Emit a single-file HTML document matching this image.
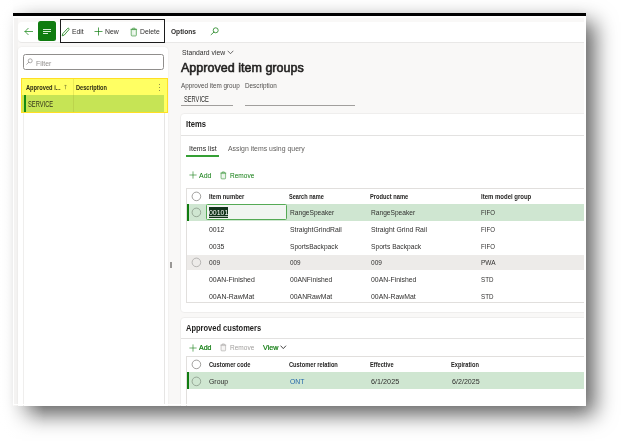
<!DOCTYPE html>
<html lang="en"><head><meta charset="utf-8"><title>Approved item groups</title>
<style>
html,body{margin:0;padding:0;background:#fff;}
body{width:621px;height:441px;overflow:hidden;position:relative;font-family:"Liberation Sans",sans-serif;}
#shot{position:absolute;left:0;top:0;width:621px;height:441px;overflow:hidden;}
#shot div, #shot svg{position:absolute;box-sizing:border-box;}
.t{white-space:pre;transform-origin:0 50%;}
#frame{left:13px;top:13px;width:573px;height:392.5px;background:#f9f8f7;box-shadow:9px 9px 20px rgba(0,0,0,.6), -3px 3px 14px rgba(0,0,0,.06);}
#clip{will-change:transform;filter:blur(0.35px);left:0;top:0;width:586px;height:405.5px;overflow:hidden;}
#lmask{left:0;top:0;width:13px;height:405.5px;background:linear-gradient(to right,rgba(255,255,255,1) 0,rgba(255,255,255,.55) 100%);}
#lmask2{left:0;top:405.5px;width:44px;height:35.5px;background:linear-gradient(to right,rgba(255,255,255,1) 0,rgba(255,255,255,.55) 13px,rgba(255,255,255,0) 44px);}

</style></head>
<body>
<div id="shot">
<div id="frame"></div>
<div id="lmask"></div><div id="lmask2"></div>
<div id="clip">
<!-- top black bar -->
<div style="left:13px;top:13px;width:573px;height:3.3px;background:#000"></div>
<div style="left:13px;top:16.3px;width:573px;height:1.5px;background:#fff"></div>
<div style="left:13px;top:16px;width:1.2px;height:389px;background:#fff"></div>
<div style="left:14.2px;top:18px;width:3.6px;height:388px;background:#f4f3f2"></div>
<!-- toolbar -->
<div style="left:18px;top:21.6px;width:569px;height:21px;background:#fff;border-radius:4px 0 0 4px;border-bottom:1px solid #e9e8e7"></div>
<svg style="left:24px;top:26px" width="11" height="11" viewBox="0 0 11 11"><path d="M8.6 5.5H1M4.2 2.3L1 5.5L4.2 8.7" fill="none" stroke="#1c8a1c" stroke-width="0.75" stroke-linecap="round" stroke-linejoin="round"/></svg>
<div style="left:38.1px;top:21.4px;width:18.4px;height:19.9px;background:#107c10;border-radius:2.5px"></div>
<div style="left:43.2px;top:28.65px;width:8.3px;height:0.65px;background:#d9eed9"></div>
<div style="left:43.2px;top:30.8px;width:8.3px;height:0.65px;background:#d9eed9"></div>
<div style="left:43.2px;top:32.95px;width:5.3px;height:0.65px;background:#d9eed9"></div>
<div style="left:60px;top:19.4px;width:105.2px;height:23.6px;border:1.5px solid #1b1b1b"></div>
<!-- edit pencil -->
<svg style="left:61px;top:26.6px" width="9" height="10" viewBox="0 0 9 10"><path d="M1.2 8.8L1.8 6.6L6.6 1.4Q7.3 0.8 7.9 1.5Q8.4 2.1 7.8 2.8L3.2 8.1Z" fill="none" stroke="#107c10" stroke-width="0.8" stroke-linejoin="round"/></svg>
<!-- plus -->
<svg style="left:94.1px;top:27px" width="9" height="9" viewBox="0 0 9 9"><path d="M4.5 0.5V8.5M0.5 4.5H8.5" stroke="#107c10" stroke-width="0.7" fill="none"/></svg>
<!-- trash -->
<svg style="left:129.8px;top:26.6px" width="8" height="10" viewBox="0 0 8 10"><path d="M1.2 2.3H6.4V8Q6.4 9 5.4 9H2.2Q1.2 9 1.2 8Z" fill="#dff0df" stroke="#2f8f2f" stroke-width="0.6" stroke-linejoin="round"/><path d="M0.5 2.3H7.1M2.7 2.2V1.1H4.9V2.2" fill="none" stroke="#2f8f2f" stroke-width="0.6"/><path d="M3 3.9V7.4M4.6 3.9V7.4" fill="none" stroke="#fff" stroke-width="0.7"/></svg>
<!-- search icon toolbar -->
<svg style="left:210px;top:26px" width="10" height="10" viewBox="0 0 10 10"><circle cx="5.7" cy="4.3" r="2.5" fill="none" stroke="#107c10" stroke-width="0.75"/><path d="M3.9 6.1L1.1 8.7" stroke="#107c10" stroke-width="0.75" stroke-linecap="round"/></svg>

<!-- left panel -->
<div style="left:18px;top:46.9px;width:150.4px;height:360px;background:#fff;border-radius:4px 4px 0 0;box-shadow:0 0 2px rgba(0,0,0,.09)"></div>
<div style="left:22.8px;top:113px;width:1px;height:293px;background:#efeeed"></div>
<div style="left:164px;top:113px;width:1px;height:292px;background:#e6e5e4"></div>
<div style="left:23.3px;top:54.2px;width:140.5px;height:15.4px;border:1px solid #908e8c;border-radius:2.5px;background:#fff"></div>
<svg style="left:25.9px;top:58.3px" width="7" height="7" viewBox="0 0 7 7"><circle cx="4.2" cy="2.8" r="2" fill="none" stroke="#8a8886" stroke-width="0.7"/><path d="M2.8 4.2L0.7 6.3" stroke="#8a8886" stroke-width="0.7" stroke-linecap="round"/></svg>
<!-- yellow highlight -->
<div style="left:21.2px;top:77.6px;width:147px;height:35.4px;background:#ffff63;border:1.2px solid #ffdf24"></div>
<div style="left:22.2px;top:95px;width:141.6px;height:17.1px;background:#c6e455"></div>
<div style="left:23.7px;top:95px;width:2px;height:17.1px;background:#168a0e"></div>
<div style="left:73.1px;top:79px;width:0.7px;height:33px;background:rgba(150,150,40,.2)"></div>
<!-- sort arrow -->
<svg style="left:63.3px;top:84px" width="5" height="6" viewBox="0 0 5 6"><path d="M2.5 5.3V1M1.3 2.1L2.5 0.9L3.7 2.1" fill="none" stroke="#6a6a30" stroke-width="0.5"/></svg>
<!-- dots -->
<div style="left:159.2px;top:84.4px;width:0.9px;height:0.9px;background:#94944a"></div>
<div style="left:159.2px;top:87.1px;width:0.9px;height:0.9px;background:#94944a"></div>
<div style="left:159.2px;top:89.8px;width:0.9px;height:0.9px;background:#94944a"></div>

<!-- splitter handle -->
<div style="left:169.8px;top:261.7px;width:2px;height:6.3px;background:#9a9896"></div>

<!-- header chevron -->
<svg style="left:227px;top:50px" width="7" height="5" viewBox="0 0 7 5"><path d="M0.7 0.8L3.5 3.7L6.3 0.8" fill="none" stroke="#323130" stroke-width="0.7"/></svg>
<div style="left:181.3px;top:104.8px;width:52px;height:0.9px;background:#a19f9d"></div>
<div style="left:245.4px;top:104.8px;width:109.8px;height:0.9px;background:#a19f9d"></div>

<!-- Items card -->
<div style="left:180.2px;top:113px;width:420px;height:199.8px;background:#fff;border:1px solid #efeeed;border-radius:4px"></div>
<div style="left:181px;top:135px;width:405px;height:0.9px;background:#e3e2e1"></div>
<div style="left:186.3px;top:155.4px;width:33px;height:1.6px;background:#35a035"></div>
<svg style="left:189px;top:171.3px" width="8" height="8" viewBox="0 0 8 8"><path d="M4 0.4V7.6M0.4 4H7.6" stroke="#107c10" stroke-width="0.6" fill="none"/></svg>
<svg style="left:219.9px;top:170.6px" width="7" height="9" viewBox="0 0 7 9"><path d="M1 2H5.6V7Q5.6 7.9 4.7 7.9H1.9Q1 7.9 1 7Z" fill="#e3f2e3" stroke="#2f8f2f" stroke-width="0.55" stroke-linejoin="round"/><path d="M0.4 2H6.2M2.3 1.9V0.9H4.3V1.9" fill="none" stroke="#2f8f2f" stroke-width="0.55"/><path d="M2.6 3.4V6.5M4 3.4V6.5" fill="none" stroke="#fff" stroke-width="0.55"/></svg>
<!-- grid 1 -->
<div style="left:186.3px;top:187.7px;width:400px;height:115.6px;border:1px solid #e1dfdd;border-right:0;background:#fff"></div>
<div style="left:187px;top:204.1px;width:399px;height:16.7px;background:#cfe6d1"></div>
<div style="left:186.5px;top:204.1px;width:2.1px;height:16.7px;background:#107c10"></div>
<div style="left:206px;top:204.1px;width:80.8px;height:16.4px;background:#f1f5f1;border:1px solid #55aa55;border-radius:1.5px"></div>
<div style="left:208.7px;top:207.1px;width:19.8px;height:11px;background:#11331a"></div>
<div style="left:187px;top:254.6px;width:399px;height:15.7px;background:#edebe9"></div>
<svg style="left:191px;top:191px" width="11" height="11" viewBox="0 0 11 11"><circle cx="5.4" cy="5.4" r="4.3" fill="#fff" stroke="#7a7876" stroke-width="0.7"/></svg>
<svg style="left:191px;top:207.4px" width="11" height="11" viewBox="0 0 11 11"><circle cx="5.4" cy="5.4" r="4.3" fill="none" stroke="#7f8f80" stroke-width="0.7"/></svg>
<svg style="left:191px;top:257.2px" width="11" height="11" viewBox="0 0 11 11"><circle cx="5.4" cy="5.4" r="4.3" fill="none" stroke="#a19f9d" stroke-width="0.7"/></svg>

<!-- Approved customers card -->
<div style="left:180.2px;top:316.6px;width:420px;height:100px;background:#fff;border:1px solid #efeeed;border-radius:4px"></div>
<div style="left:181px;top:338.4px;width:405px;height:0.9px;background:#e3e2e1"></div>
<svg style="left:189px;top:343.6px" width="8" height="8" viewBox="0 0 8 8"><path d="M4 0.4V7.6M0.4 4H7.6" stroke="#107c10" stroke-width="0.6" fill="none"/></svg>
<svg style="left:219.9px;top:343.0px" width="7" height="9" viewBox="0 0 7 9"><path d="M1 2H5.6V7Q5.6 7.9 4.7 7.9H1.9Q1 7.9 1 7Z" fill="#f1f0ef" stroke="#a5a3a1" stroke-width="0.55" stroke-linejoin="round"/><path d="M0.4 2H6.2M2.3 1.9V0.9H4.3V1.9" fill="none" stroke="#a5a3a1" stroke-width="0.55"/><path d="M2.6 3.4V6.5M4 3.4V6.5" fill="none" stroke="#fff" stroke-width="0.55"/></svg>
<svg style="left:280.3px;top:345.2px" width="7" height="5" viewBox="0 0 7 5"><path d="M0.6 0.7L3.3 3.6L6 0.7" fill="none" stroke="#323130" stroke-width="0.9"/></svg>
<!-- grid 2 -->
<div style="left:186.3px;top:355.5px;width:400px;height:60px;border:1px solid #e1dfdd;border-right:0;background:#fff"></div>
<div style="left:187px;top:372.2px;width:399px;height:16.6px;background:#cfe6d1"></div>
<div style="left:186.6px;top:372.2px;width:2.1px;height:16.6px;background:#107c10"></div>
<svg style="left:191px;top:359.3px" width="11" height="11" viewBox="0 0 11 11"><circle cx="5.4" cy="5.4" r="4.3" fill="#fff" stroke="#7a7876" stroke-width="0.7"/></svg>
<svg style="left:191px;top:376px" width="11" height="11" viewBox="0 0 11 11"><circle cx="5.4" cy="5.4" r="4.3" fill="none" stroke="#7f8f80" stroke-width="0.7"/></svg>

<div style="left:584.4px;top:16px;width:1.6px;height:390px;background:#fff"></div>
<div style="left:13px;top:404.3px;width:573px;height:1.2px;background:#fff"></div>

<div class="t" style="left:72.0px;top:26.94px;font-size:8.03px;line-height:9.64px;font-weight:400;color:#302f2e;transform:scaleX(0.8452);">Edit</div>
<div class="t" style="left:105.2px;top:26.94px;font-size:8.03px;line-height:9.64px;font-weight:400;color:#302f2e;transform:scaleX(0.8589);">New</div>
<div class="t" style="left:140.3px;top:26.94px;font-size:8.03px;line-height:9.64px;font-weight:400;color:#302f2e;transform:scaleX(0.8489);">Delete</div>
<div class="t" style="left:171.2px;top:27.03px;font-size:7.7px;line-height:9.24px;font-weight:700;color:#302f2e;transform:scaleX(0.8569);">Options</div>
<div class="t" style="left:36.0px;top:58.65px;font-size:7.49px;line-height:8.99px;font-weight:400;color:#918f8d;transform:scaleX(0.9188);">Filter</div>
<div class="t" style="left:25.8px;top:83.81px;font-size:6.53px;line-height:7.84px;font-weight:700;color:#2b2a14;transform:scaleX(0.8736);">Approved i...</div>
<div class="t" style="left:76.2px;top:83.81px;font-size:6.53px;line-height:7.84px;font-weight:700;color:#2b2a14;transform:scaleX(0.8640);">Description</div>
<div class="t" style="left:27.9px;top:99.06px;font-size:8.35px;line-height:10.02px;font-weight:400;color:#33321a;transform:scaleX(0.6908);">SERVICE</div>
<div class="t" style="left:181.6px;top:49.38px;font-size:7.28px;line-height:8.74px;font-weight:400;color:#302f2e;transform:scaleX(0.9372);">Standard view</div>
<div class="t" style="left:181.3px;top:59.63px;font-size:13.05px;line-height:15.66px;font-weight:400;color:#201f1e;transform:scaleX(0.9617);-webkit-text-stroke:0.59px currentColor;">Approved item groups</div>
<div class="t" style="left:181.3px;top:82.11px;font-size:6.53px;line-height:7.84px;font-weight:400;color:#504e4c;transform:scaleX(0.9696);">Approved item group</div>
<div class="t" style="left:245.2px;top:82.11px;font-size:6.53px;line-height:7.84px;font-weight:400;color:#504e4c;transform:scaleX(0.9749);">Description</div>
<div class="t" style="left:184.2px;top:93.86px;font-size:8.35px;line-height:10.02px;font-weight:400;color:#302f2e;transform:scaleX(0.6826);">SERVICE</div>
<div class="t" style="left:186.0px;top:119.08px;font-size:8.99px;line-height:10.79px;font-weight:700;color:#201f1e;transform:scaleX(0.8539);">Items</div>
<div class="t" style="left:188.8px;top:144.15px;font-size:7.49px;line-height:8.99px;font-weight:400;color:#201f1e;transform:scaleX(0.9371);">Items list</div>
<div class="t" style="left:227.8px;top:144.15px;font-size:7.49px;line-height:8.99px;font-weight:400;color:#605e5c;transform:scaleX(0.9222);">Assign items using query</div>
<div class="t" style="left:199.2px;top:170.95px;font-size:7.49px;line-height:8.99px;font-weight:400;color:#107c10;transform:scaleX(0.9369);">Add</div>
<div class="t" style="left:229.8px;top:170.95px;font-size:7.49px;line-height:8.99px;font-weight:400;color:#107c10;transform:scaleX(0.8744);">Remove</div>
<div class="t" style="left:208.5px;top:193.01px;font-size:6.53px;line-height:7.84px;font-weight:700;color:#252423;transform:scaleX(0.9045);">Item number</div>
<div class="t" style="left:289.4px;top:193.01px;font-size:6.53px;line-height:7.84px;font-weight:700;color:#252423;transform:scaleX(0.8573);">Search name</div>
<div class="t" style="left:369.9px;top:193.01px;font-size:6.53px;line-height:7.84px;font-weight:700;color:#252423;transform:scaleX(0.8808);">Product name</div>
<div class="t" style="left:480.6px;top:193.01px;font-size:6.53px;line-height:7.84px;font-weight:700;color:#252423;transform:scaleX(0.9195);">Item model group</div>
<div class="t" style="left:208.9px;top:208.45px;font-size:7.49px;line-height:8.99px;font-weight:400;color:#ffffff;transform:scaleX(0.9265);text-decoration:underline;text-decoration-thickness:0.5px;text-decoration-color:rgba(255,255,255,.65);">00101</div>
<div class="t" style="left:290.0px;top:208.45px;font-size:7.49px;line-height:8.99px;font-weight:400;color:#302f2e;transform:scaleX(0.8845);">RangeSpeaker</div>
<div class="t" style="left:370.7px;top:208.45px;font-size:7.49px;line-height:8.99px;font-weight:400;color:#302f2e;transform:scaleX(0.8845);">RangeSpeaker</div>
<div class="t" style="left:481.4px;top:208.45px;font-size:7.49px;line-height:8.99px;font-weight:400;color:#302f2e;transform:scaleX(0.8143);">FIFO</div>
<div class="t" style="left:208.9px;top:225.35px;font-size:7.49px;line-height:8.99px;font-weight:400;color:#302f2e;transform:scaleX(0.9239);">0012</div>
<div class="t" style="left:290.0px;top:225.35px;font-size:7.49px;line-height:8.99px;font-weight:400;color:#302f2e;transform:scaleX(0.9098);">StraightGrindRail</div>
<div class="t" style="left:370.7px;top:225.35px;font-size:7.49px;line-height:8.99px;font-weight:400;color:#302f2e;transform:scaleX(0.9149);">Straight Grind Rail</div>
<div class="t" style="left:481.4px;top:225.35px;font-size:7.49px;line-height:8.99px;font-weight:400;color:#302f2e;transform:scaleX(0.8143);">FIFO</div>
<div class="t" style="left:208.9px;top:242.05px;font-size:7.49px;line-height:8.99px;font-weight:400;color:#302f2e;transform:scaleX(0.9239);">0035</div>
<div class="t" style="left:290.0px;top:242.05px;font-size:7.49px;line-height:8.99px;font-weight:400;color:#302f2e;transform:scaleX(0.8867);">SportsBackpack</div>
<div class="t" style="left:370.7px;top:242.05px;font-size:7.49px;line-height:8.99px;font-weight:400;color:#302f2e;transform:scaleX(0.8913);">Sports Backpack</div>
<div class="t" style="left:481.4px;top:242.05px;font-size:7.49px;line-height:8.99px;font-weight:400;color:#302f2e;transform:scaleX(0.8143);">FIFO</div>
<div class="t" style="left:208.9px;top:258.45px;font-size:7.49px;line-height:8.99px;font-weight:400;color:#302f2e;transform:scaleX(0.8876);">009</div>
<div class="t" style="left:290.0px;top:258.45px;font-size:7.49px;line-height:8.99px;font-weight:400;color:#302f2e;transform:scaleX(0.8476);">009</div>
<div class="t" style="left:370.7px;top:258.45px;font-size:7.49px;line-height:8.99px;font-weight:400;color:#302f2e;transform:scaleX(0.8716);">009</div>
<div class="t" style="left:481.4px;top:258.45px;font-size:7.49px;line-height:8.99px;font-weight:400;color:#302f2e;transform:scaleX(0.8698);">PWA</div>
<div class="t" style="left:208.9px;top:274.95px;font-size:7.49px;line-height:8.99px;font-weight:400;color:#302f2e;transform:scaleX(0.9242);">00AN-Finished</div>
<div class="t" style="left:290.0px;top:274.95px;font-size:7.49px;line-height:8.99px;font-weight:400;color:#302f2e;transform:scaleX(0.9012);">00ANFinished</div>
<div class="t" style="left:370.7px;top:274.95px;font-size:7.49px;line-height:8.99px;font-weight:400;color:#302f2e;transform:scaleX(0.9162);">00AN-Finished</div>
<div class="t" style="left:481.4px;top:274.95px;font-size:7.49px;line-height:8.99px;font-weight:400;color:#302f2e;transform:scaleX(0.8278);">STD</div>
<div class="t" style="left:208.9px;top:291.65px;font-size:7.49px;line-height:8.99px;font-weight:400;color:#302f2e;transform:scaleX(0.9302);">00AN-RawMat</div>
<div class="t" style="left:290.0px;top:291.65px;font-size:7.49px;line-height:8.99px;font-weight:400;color:#302f2e;transform:scaleX(0.9132);">00ANRawMat</div>
<div class="t" style="left:370.7px;top:291.65px;font-size:7.49px;line-height:8.99px;font-weight:400;color:#302f2e;transform:scaleX(0.9199);">00AN-RawMat</div>
<div class="t" style="left:481.4px;top:291.65px;font-size:7.49px;line-height:8.99px;font-weight:400;color:#302f2e;transform:scaleX(0.8278);">STD</div>
<div class="t" style="left:186.3px;top:322.78px;font-size:8.99px;line-height:10.79px;font-weight:700;color:#201f1e;transform:scaleX(0.8355);">Approved customers</div>
<div class="t" style="left:199.2px;top:343.25px;font-size:7.49px;line-height:8.99px;font-weight:400;color:#107c10;transform:scaleX(0.9369);-webkit-text-stroke:0.22px currentColor;">Add</div>
<div class="t" style="left:229.8px;top:343.25px;font-size:7.49px;line-height:8.99px;font-weight:400;color:#a19f9d;transform:scaleX(0.8744);">Remove</div>
<div class="t" style="left:262.6px;top:343.25px;font-size:7.49px;line-height:8.99px;font-weight:400;color:#107c10;transform:scaleX(0.9565);-webkit-text-stroke:0.22px currentColor;">View</div>
<div class="t" style="left:208.5px;top:361.21px;font-size:6.53px;line-height:7.84px;font-weight:700;color:#252423;transform:scaleX(0.8722);">Customer code</div>
<div class="t" style="left:289.2px;top:361.21px;font-size:6.53px;line-height:7.84px;font-weight:700;color:#252423;transform:scaleX(0.8762);">Customer relation</div>
<div class="t" style="left:369.7px;top:361.21px;font-size:6.53px;line-height:7.84px;font-weight:700;color:#252423;transform:scaleX(0.8681);">Effective</div>
<div class="t" style="left:450.8px;top:361.21px;font-size:6.53px;line-height:7.84px;font-weight:700;color:#252423;transform:scaleX(0.8751);">Expiration</div>
<div class="t" style="left:208.9px;top:377.05px;font-size:7.49px;line-height:8.99px;font-weight:400;color:#302f2e;transform:scaleX(0.9217);">Group</div>
<div class="t" style="left:289.7px;top:377.05px;font-size:7.49px;line-height:8.99px;font-weight:400;color:#2266aa;transform:scaleX(0.9105);">ONT</div>
<div class="t" style="left:370.5px;top:377.05px;font-size:7.49px;line-height:8.99px;font-weight:400;color:#302f2e;transform:scaleX(0.9672);">6/1/2025</div>
<div class="t" style="left:451.6px;top:377.05px;font-size:7.49px;line-height:8.99px;font-weight:400;color:#302f2e;transform:scaleX(0.9534);">6/2/2025</div>
</div>
</div>
</body></html>
